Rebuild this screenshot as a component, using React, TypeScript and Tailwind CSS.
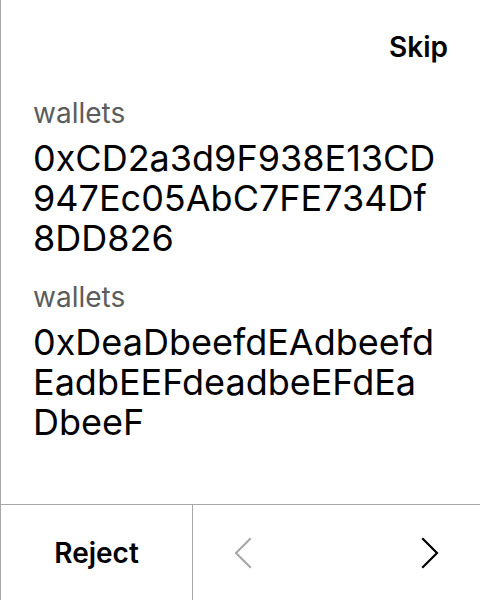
import React from "react";

const entries = [
  { label: "wallets", value: "0xCD2a3d9F938E13CD947Ec05AbC7FE734Df8DD826" },
  { label: "wallets", value: "0xDeaDbeefdEAdbeefdEadbEEFdeadbeEFdEaDbeeF" },
];

function Chevron({ dir, muted }: { dir: "left" | "right"; muted?: boolean }) {
  return (
    <svg width="20" height="32" viewBox="0 0 20 32" fill="none">
      <path
        d={dir === "left" ? "M17 2 L3 16 L17 30" : "M3 2 L17 16 L3 30"}
        stroke={muted ? "#a8a8a8" : "#000"}
        strokeWidth="2.2"
        strokeLinecap="square"
      />
    </svg>
  );
}

export default function App() {
  return (
    <div
      className="w-[480px] h-[600px] bg-white border-l border-[#a8a8a8] flex flex-col text-black"
      style={{ fontFamily: "Inter, 'Noto Sans', sans-serif" }}
    >
      <div className="flex justify-end pt-[31px] pr-[32px]">
        <button className="text-[28px] leading-[32px] font-semibold">Skip</button>
      </div>

      <div className="flex-1 pl-[32px] pr-[38px] pt-[32px]">
        {entries.map((e, i) => (
          <div key={i} className="mb-[21px]">
            <div className="text-[28px] leading-[36px] text-[#5c5c5c] mb-[7px]">{e.label}</div>
            <div className="text-[36px] leading-[40px] break-all">{e.value}</div>
          </div>
        ))}
      </div>

      <div className="h-[96px] border-t border-[#a8a8a8] flex">
        <button className="w-[192px] border-r border-[#a8a8a8] text-[28px] font-semibold">
          Reject
        </button>
        <div className="flex-1 flex items-center justify-between pl-[40px] pr-[40px]">
          <Chevron dir="left" muted />
          <Chevron dir="right" />
        </div>
      </div>
    </div>
  );
}
